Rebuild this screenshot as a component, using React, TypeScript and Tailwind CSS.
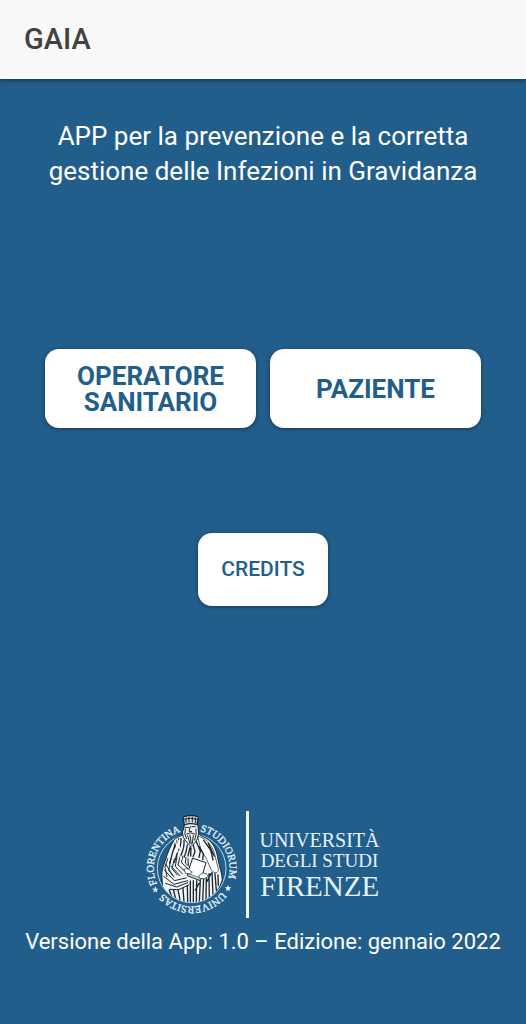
const serif = "font-['Liberation_Serif',serif]";

function Star({ x, y }: { x: number; y: number }) {
  return (
    <path
      transform={`translate(${x} ${y})`}
      d="M0-10 3-3 10-3 4 2 6 9 0 5-6 9-4 2-10-3-3-3Z"
      fill="#e4f3fb"
    />
  );
}

function Seal() {
  return (
    <svg viewBox="18 18 276 318" className="h-[106px] w-[92px]" role="img" aria-label="Florentina Studiorum Universitas">
      <defs>
        {/* clockwise circle that starts at the lower left */}
        <path id="ring" d="M52.5 237A114 114 0 0 1 257.5 137A114 114 0 0 1 52.5 237" />
        <clipPath id="disc">
          <path d="M40 10H270V187H257A102 102 0 0 1 53 187H40Z" />
        </clipPath>
      </defs>
      <circle cx="155" cy="187" r="103" fill="none" stroke="#b9dcee" strokeWidth="3" />

      <g className={serif} fill="#e4f3fb" stroke="#e4f3fb" strokeWidth="1" fontSize="31" textAnchor="middle">
        <text>
          <textPath href="#ring" startOffset="14%">FLORENTINA</textPath>
        </text>
        <text>
          <textPath href="#ring" startOffset="48.6%">STUDIORUM</textPath>
        </text>
        <text>
          <textPath href="#ring" startOffset="81.7%">UNIVERSITAS</textPath>
        </text>
      </g>
      <Star x={46} y={251} />
      <Star x={264} y={247} />

      <g clipPath="url(#disc)" strokeLinecap="round" strokeLinejoin="round">
        {/* robe */}
        <path
          d="M130 86C120 92 107 93 101 104C91 122 83 139 77 160C70 180 63 198 66 216L68 246L90 272L125 292H190L222 268L240 240L247 222C246 204 239 184 234 160C231 138 224 118 208 103C197 94 184 91 176 84Z"
          fill="#f3f6f8"
          stroke="#18262f"
          strokeWidth="3"
        />
        {/* right mantle fold */}
        <path
          d="M174 90C196 98 214 112 223 142L235 188C237 204 222 203 214 192L200 160 182 128Z"
          fill="#fff"
          stroke="#18262f"
          strokeWidth="2"
        />
        {/* head and beard */}
        <path
          d="M133 50L132 66 127 78 130 94 136 103 143 112 153 122 164 111 172 99 176 82 173 50Z"
          fill="#f2f5f6"
          stroke="#18262f"
          strokeWidth="3"
        />
        <path d="M129 33Q152 24 175 33L171 56Q152 49 133 57Z" fill="#d3dfe4" stroke="#18262f" strokeWidth="4" />
        <path
          d="M130 40Q152 33 174 40M138 36V50M147 34V48M157 34V48M166 36V50M136 64H147M156 62H166M151 62L147 76 155 77M140 84Q152 76 164 84M143 89L150 113M150 87L154 114M160 88L157 112M168 69Q171 86 164 102M136 69Q131 83 139 98"
          fill="none"
          stroke="#18262f"
          strokeWidth="3"
        />
        {/* cloak folds */}
        <path
          d="M123 97Q124 120 112 141L103 169M132 103Q134 127 121 151M142 117Q139 138 133 153M116 98L99 135 89 172M108 103L101 130M150 124L144 150M160 118L165 137 159 152M169 107L181 135 177 154M178 122L190 144 188 160M191 103L212 132 219 162M205 112L223 151M153 126L152 150"
          fill="none"
          stroke="#18262f"
          strokeWidth="4"
        />
        <path
          d="M83 158L75 184 81 212M93 158L86 193 102 213M103 159L96 188 113 208M111 150L106 181 127 204M120 151L114 177 138 198M129 150L124 169 145 189M138 154L136 171 148 182M73 192L103 224 138 216M71 211L102 235 143 224M77 232L110 243 143 230M88 250L116 251 146 237M93 180L120 209M78 175L98 209M144 158L145 176"
          fill="none"
          stroke="#18262f"
          strokeWidth="3"
        />
        <path
          d="M88 253L96 273M100 251L108 282M114 251L121 288M129 247L132 290M142 238L143 290M151 225L151 291M160 224L160 290M170 224L169 290M181 222L178 288M191 214L188 286M199 207L198 281M207 203L208 276M216 199L219 268M225 203L229 253M234 207L235 238M201 226L213 203M166 252L177 232"
          fill="none"
          stroke="#18262f"
          strokeWidth="4"
        />
        {/* book and hands */}
        <path d="M159 157L198 170 184 217 143 203Z" fill="#fff" stroke="#18262f" strokeWidth="3" />
        <path d="M143 203L142 209 181 224 184 217" fill="#cbd9df" stroke="#18262f" strokeWidth="3" />
        <path
          d="M132 190Q143 184 149 193L157 198 150 203 138 202ZM177 209L188 201 199 203 205 211 194 218 180 217Z"
          fill="#fff"
          stroke="#18262f"
          strokeWidth="2"
        />
        <path d="M106 103L114 137 124 160M113 101L119 128" fill="none" stroke="#f7fafb" strokeWidth="4" />
      </g>
    </svg>
  );
}

function UniversityLogo() {
  return (
    <div className="flex items-center justify-center">
      <Seal />
      <div className="ml-2 h-[107px] w-[3px] bg-[#f1f8fc]" />
      <div className={`ml-[10px] text-[#e4f3fb] ${serif}`}>
        <p className="text-[20px] leading-[20px]">UNIVERSITÀ</p>
        <p className="text-[19px] leading-[22px]">DEGLI STUDI</p>
        <p className="text-[29px] leading-[28px]">FIRENZE</p>
      </div>
    </div>
  );
}

const buttonBase =
  "rounded-[14px] bg-white text-[#225e8b] shadow-[0_1px_4px_rgba(0,0,0,0.4)] active:bg-gray-100";

export default function App() {
  return (
    <div className="flex min-h-screen flex-col bg-[#225e8b] font-[Roboto,sans-serif]">
      <header className="flex h-[79px] items-center bg-[#f8f8f8] px-6 shadow-[0_1px_5px_rgba(0,0,0,0.5)]">
        <h1 className="text-[29px] font-medium text-[#424242]">GAIA</h1>
      </header>

      <main className="flex flex-1 flex-col items-center pt-10 text-white">
        <p className="px-8 text-center text-[26px] leading-[35px]">
          APP per la prevenzione e la corretta
          <br />
          gestione delle Infezioni in Gravidanza
        </p>

        <div className="mt-[160px] flex w-full gap-[14px] px-[45px] text-[26px] leading-[26px] font-bold">
          <button type="button" className={`h-[79px] flex-1 px-6 ${buttonBase}`}>
            OPERATORE SANITARIO
          </button>
          <button type="button" className={`h-[79px] flex-1 px-6 ${buttonBase}`}>
            PAZIENTE
          </button>
        </div>

        <button type="button" className={`mt-[105px] h-[73px] px-[23px] text-[21px] font-medium ${buttonBase}`}>
          CREDITS
        </button>

        <footer className="mt-auto pb-[66px] text-center">
          <UniversityLogo />
          <p className="mt-2 text-[22px] leading-8">Versione della App: 1.0 – Edizione: gennaio 2022</p>
        </footer>
      </main>
    </div>
  );
}
